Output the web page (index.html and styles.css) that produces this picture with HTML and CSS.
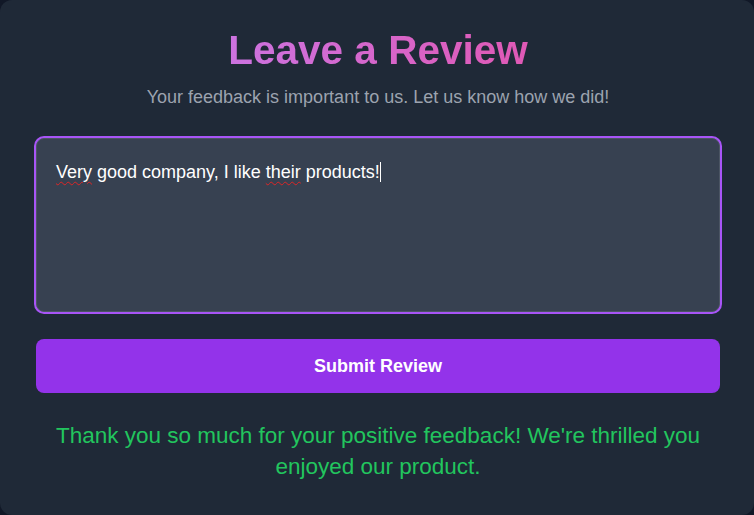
FILE: index.html
```html
<!DOCTYPE html>
<html lang="en">
<head>
<meta charset="utf-8">
<title>Leave a Review</title>
<link rel="stylesheet" href="styles.css">
</head>
<body>
<main class="card">
  <h1 class="title">Leave a Review</h1>
  <p class="subtitle">Your feedback is important to us. Let us know how we did!</p>
  <div class="field" role="textbox" aria-multiline="true" contenteditable="true" spellcheck="true"><span class="misspelled">Very</span> good company, I like <span class="misspelled">their</span> products!<span class="caret"></span></div>
  <button class="submit" type="button">Submit Review</button>
  <p class="thanks">Thank you so much for your positive feedback! We're thrilled you enjoyed our product.</p>
</main>
</body>
</html>
```

FILE: styles.css
```css
* { box-sizing: border-box; }
html, body {
  margin: 0;
  padding: 0;
  background: #111827;
}
body {
  font-family: "Liberation Sans", Arial, sans-serif;
  width: 754px;
  height: 515px;
}
.card {
  width: 754px;
  height: 515px;
  background: #1f2937;
  border-radius: 12px;
  padding: 26px 34px 0 36px;
  display: flex;
  flex-direction: column;
  align-items: stretch;
}
.title {
  margin: 0;
  font-size: 40.5px;
  line-height: 48px;
  font-weight: 700;
  text-align: center;
  background: linear-gradient(to right, #c084fc, #ec4899);
  -webkit-background-clip: text;
  background-clip: text;
  color: transparent;
}
.subtitle {
  margin: 9px 0 0;
  font-size: 18px;
  line-height: 28px;
  color: #9ca3af;
  text-align: center;
}
.field {
  margin-top: 27px;
  height: 174px;
  background: #374151;
  border: 1px solid #4b5563;
  border-radius: 8px;
  box-shadow: 0 0 0 2px #a855f7;
  padding: 19px 19px;
  font-size: 18px;
  line-height: 28px;
  color: #ffffff;
  outline: none;
}
.misspelled {
  text-decoration: underline wavy #dc2626;
  text-decoration-thickness: 1px;
  text-underline-offset: 3px;
}
.caret {
  display: inline-block;
  width: 1px;
  height: 20px;
  background: #ffffff;
  vertical-align: -4px;
}
.submit {
  margin-top: 27px;
  height: 54px;
  border: none;
  border-radius: 8px;
  background: #9333ea;
  color: #ffffff;
  font-family: "Liberation Sans", Arial, sans-serif;
  font-size: 18px;
  font-weight: 700;
  cursor: pointer;
}
.thanks {
  margin: 27px 0 0;
  padding: 0 8px;
  font-size: 22.5px;
  line-height: 31px;
  color: #22c55e;
  text-align: center;
}
```
